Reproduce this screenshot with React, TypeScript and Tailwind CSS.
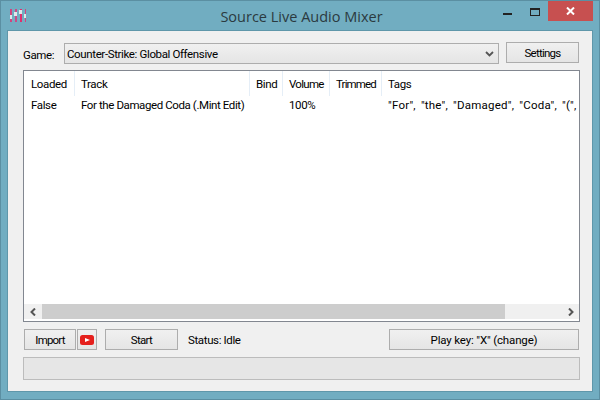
import React from "react";

const btn =
  "flex items-center justify-center border border-[#adadad] bg-gradient-to-b from-[#f0f0f0] to-[#e5e5e5] pt-[2px] text-[#000]";

const columns = [
  { label: "Loaded", w: "w-[51px] pl-[7px]" },
  { label: "Track", w: "w-[175px] pl-[6px]" },
  { label: "Bind", w: "w-[33px] pl-[6px]" },
  { label: "Volume", w: "w-[47px] pl-[6px] tracking-[-0.7px]" },
  { label: "Trimmed", w: "w-[52px] pl-[6px] tracking-[-0.85px]" },
  { label: "Tags", w: "flex-1 pl-[6px]" },
];

function Logo() {
  return (
    <svg width="16" height="13" viewBox="0 0 16 13" className="block">
      <rect x="0" y="0" width="2" height="13" fill="#d2457f" />
      <rect x="5" y="0" width="2" height="13" fill="#c94a86" />
      <rect x="10" y="0" width="2" height="13" fill="#e02f6e" />
      <rect x="15" y="0" width="1" height="13" fill="#d2457f" />
      <rect x="0" y="6" width="2" height="4" fill="#dfe8ea" />
      <rect x="4" y="3" width="3" height="4" fill="#dfe8ea" />
      <rect x="9" y="1" width="3" height="4" fill="#dfe8ea" />
      <rect x="14" y="5" width="2" height="4" fill="#dfe8ea" />
    </svg>
  );
}

function YouTube() {
  return (
    <svg width="14" height="10" viewBox="0 0 14 10" className="-mt-[2px] block">
      <rect x="0" y="0" width="14" height="10" rx="2.5" fill="#e5201d" />
      <path d="M5 3 L10 5 L5 7 Z" fill="#fff" />
    </svg>
  );
}

export default function App() {
  return (
    <div
      className="flex h-[400px] w-[600px] flex-col overflow-hidden border border-[#5b8fa2] bg-[#71adc1] text-[11.5px] tracking-[-0.37px] text-black"
      style={{ fontFamily: 'Roboto, "Open Sans", sans-serif' }}
    >
      <div className="flex h-[29px] shrink-0 items-start">
        <div className="flex-1 basis-0 pl-[9px] pt-[8px]">
          <Logo />
        </div>
        <div
          className="pt-[6px] text-center text-[14.5px] leading-[20px] tracking-normal text-[#2b3a40]"
          style={{ fontFamily: '"Open Sans", sans-serif' }}
        >
          Source Live Audio Mixer
        </div>
        <div className="flex h-[20px] flex-1 basis-0 items-start justify-end pr-[6px]">
          <div className="mr-[18px] mt-[12px] h-[2px] w-[9px] bg-[#222]" />
          <div className="mr-[8px] mt-[7px] h-[8px] w-[10px] border border-t-2 border-[#222]" />
          <div className="flex h-[20px] w-[45px] items-center justify-center bg-[#c75050]">
            <svg width="9" height="8" viewBox="0 0 9 8">
              <path d="M1 0.5 L8 7.5 M8 0.5 L1 7.5" stroke="#fff" strokeWidth="2" />
            </svg>
          </div>
        </div>
      </div>

      <div className="mx-[6px] flex h-[362px] flex-col border border-[#5f97aa] bg-[#f0f0f0] pl-[15px] pr-[12px] pt-[11px]">
        <div className="flex h-[22px] items-start">
          <div className="w-[41px] pt-[3px] leading-[20px]">Game:</div>
          <div className="mt-[1px] flex h-[21px] w-[435px] items-center justify-between border border-[#adadad] bg-gradient-to-b from-[#f0f0f0] to-[#e5e5e5] pl-[2px] pr-[4px] pt-[2px]">
            <span>Counter-Strike: Global Offensive</span>
            <svg width="9" height="6" viewBox="0 0 9 6" className="-mt-[2px]">
              <path d="M1 1 L4.5 4.5 L8 1" fill="none" stroke="#555" strokeWidth="1.8" />
            </svg>
          </div>
          <div className={`${btn} ml-[7px] h-[21px] w-[73px] tracking-[-0.75px]`}>Settings</div>
        </div>

        <div className="mt-[6px] flex h-[252px] w-[557px] flex-col border border-[#828790] bg-white">
          <div className="flex h-[25px] shrink-0">
            {columns.map((c) => (
              <div
                key={c.label}
                className={`${c.w} flex items-center border-r border-[#e5eef7] pt-[2px] last:border-r-0`}
              >
                {c.label}
              </div>
            ))}
          </div>
          <div className="flex h-[18px] shrink-0 items-center whitespace-nowrap pt-[2px]">
            <div className="w-[51px] pl-[7px]">False</div>
            <div className="w-[175px] pl-[6px] tracking-[-0.4px]">For the Damaged Coda (.Mint Edit)</div>
            <div className="w-[33px]" />
            <div className="w-[47px] pl-[6px]">100%</div>
            <div className="w-[52px]" />
            <div className="min-w-0 flex-1 overflow-hidden pl-[6px] tracking-[0.23px] [word-spacing:2px]">
              "For", "the", "Damaged", "Coda", "(", ".Mint", "Edit", ")"
            </div>
          </div>
          <div className="flex-1" />
          <div className="mb-[2px] flex h-[15px] shrink-0 bg-[#f0f0f0]">
            <div className="flex w-[18px] items-center justify-center">
              <svg width="6" height="8" viewBox="0 0 6 8">
                <path d="M5 0.5 L1.5 4 L5 7.5" fill="none" stroke="#555" strokeWidth="2" />
              </svg>
            </div>
            <div className="w-[463px] bg-[#cdcdcd]" />
            <div className="flex flex-1 items-center justify-end pr-[5px]">
              <svg width="6" height="8" viewBox="0 0 6 8">
                <path d="M1 0.5 L4.5 4 L1 7.5" fill="none" stroke="#555" strokeWidth="2" />
              </svg>
            </div>
          </div>
        </div>

        <div className="mt-[7px] flex h-[21px] items-center">
          <div className={`${btn} ml-[1px] h-[21px] w-[52px] tracking-[-0.8px]`}>Import</div>
          <div className={`${btn} ml-[1px] h-[21px] w-[20px]`}>
            <YouTube />
          </div>
          <div className={`${btn} ml-[8px] h-[21px] w-[73px] tracking-[-0.7px]`}>Start</div>
          <div className="ml-[10px] w-[201px] pt-[2px]">Status: Idle</div>
          <div className={`${btn} h-[21px] w-[190px] tracking-[-0.15px]`}>Play key: "X" (change)</div>
        </div>

        <div className="mt-[7px] h-[23px] w-[557px] border border-[#bcbcbc] bg-[#e6e6e6]" />
      </div>
    </div>
  );
}
